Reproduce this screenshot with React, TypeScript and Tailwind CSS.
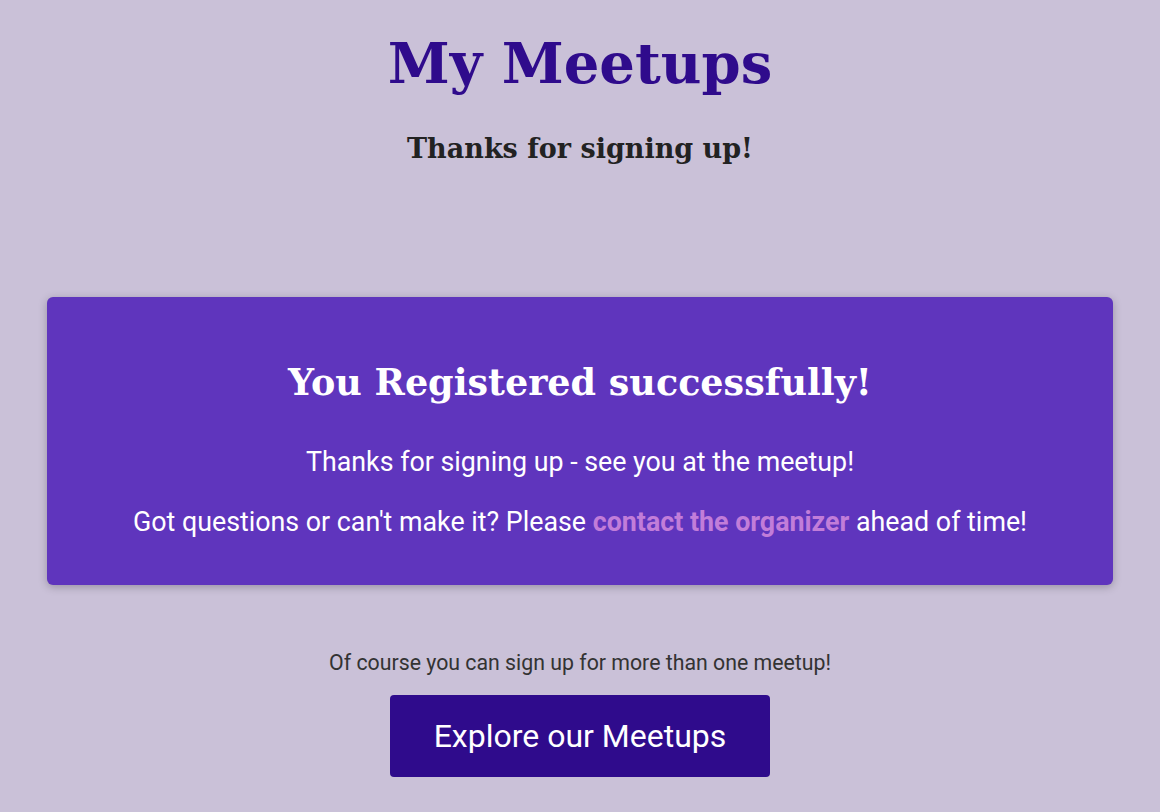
export default function App() {
  return (
    <div className="min-h-[812px] bg-[#cac1d8] font-['Roboto',sans-serif] flex flex-col items-center">
      {/* Header */}
      <header className="flex flex-col items-center pt-[18px]">
        <h1 className="font-['DejaVu_Serif',serif] font-bold text-[56px] leading-[90px] text-[#2f0b8c]">
          My Meetups
        </h1>
        <h2 className="font-['DejaVu_Serif',serif] font-bold text-[27px] leading-[40px] text-[#222] mt-[21px]">
          Thanks for signing up!
        </h2>
      </header>

      {/* Success card */}
      <section className="mt-[128px] w-[1066px] h-[288px] rounded-md bg-[#5f35bd] shadow-[0_2px_8px_rgba(0,0,0,0.25)] flex flex-col items-center pt-[58px] text-white">
        <h2 className="font-['DejaVu_Serif',serif] font-bold text-[36.5px] leading-[56px]">
          You Registered successfully!
        </h2>
        <p className="text-[26.8px] leading-[32px] mt-[35px]">Thanks for signing up - see you at the meetup!</p>
        <p className="text-[26.8px] leading-[32px] mt-[28px]">
          Got questions or can't make it? Please{" "}
          <a href="#" className="font-bold text-[#c27dd9]">
            contact the organizer
          </a>{" "}
          ahead of time!
        </p>
      </section>

      {/* Footer CTA */}
      <section className="flex flex-col items-center mt-[65px]">
        <p className="text-[21.3px] leading-[26px] text-[#333]">Of course you can sign up for more than one meetup!</p>
        <a
          href="#"
          className="mt-[19px] w-[380px] h-[82px] rounded bg-[#2f0b8c] text-white text-[32px] flex items-center justify-center"
        >
          Explore our Meetups
        </a>
      </section>
    </div>
  );
}
